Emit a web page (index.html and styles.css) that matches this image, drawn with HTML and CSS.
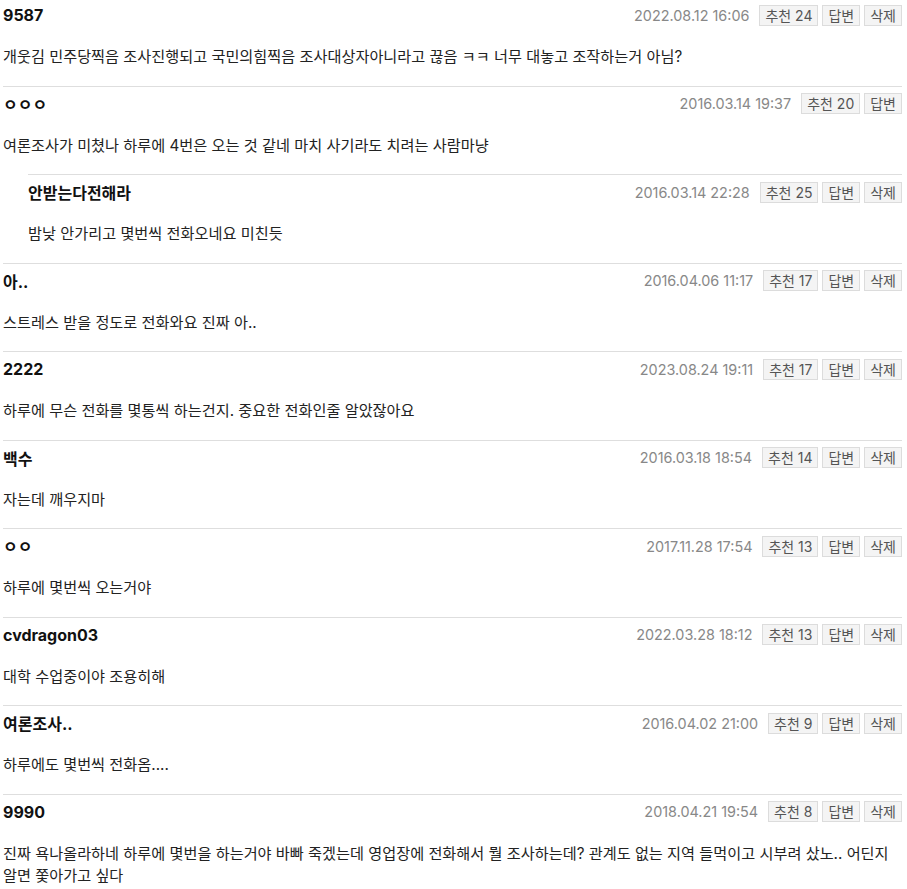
FILE: index.html
```html
<!DOCTYPE html>
<html lang="ko">
<head>
  <meta charset="UTF-8">
  <meta name="viewport" content="width=device-width, initial-scale=1.0">
  <title>댓글</title>
  <link rel="stylesheet" href="styles.css">
</head>
<body>
  <div class="comments">
    <div class="comment">
      <div class="head">
        <span class="name">9587</span>
        <span class="date">2022.08.12 16:06</span>
        <button class="btn">추천 24</button>
        <button class="btn">답변</button>
        <button class="btn">삭제</button>
      </div>
      <p class="text">개웃김 민주당찍음 조사진행되고 국민의힘찍음 조사대상자아니라고 끊음 ㅋㅋ 너무 대놓고 조작하는거 아님?</p>
    </div>

    <div class="comment">
      <div class="head">
        <span class="name">ㅇㅇㅇ</span>
        <span class="date">2016.03.14 19:37</span>
        <button class="btn">추천 20</button>
        <button class="btn">답변</button>
      </div>
      <p class="text">여론조사가 미쳤나 하루에 4번은 오는 것 같네 마치 사기라도 치려는 사람마냥</p>
    </div>

    <div class="comment reply">
      <div class="head">
        <span class="name">안받는다전해라</span>
        <span class="date">2016.03.14 22:28</span>
        <button class="btn">추천 25</button>
        <button class="btn">답변</button>
        <button class="btn">삭제</button>
      </div>
      <p class="text">밤낮 안가리고 몇번씩 전화오네요 미친듯</p>
    </div>

    <div class="comment">
      <div class="head">
        <span class="name">아..</span>
        <span class="date">2016.04.06 11:17</span>
        <button class="btn">추천 17</button>
        <button class="btn">답변</button>
        <button class="btn">삭제</button>
      </div>
      <p class="text">스트레스 받을 정도로 전화와요 진짜 아..</p>
    </div>

    <div class="comment">
      <div class="head">
        <span class="name">2222</span>
        <span class="date">2023.08.24 19:11</span>
        <button class="btn">추천 17</button>
        <button class="btn">답변</button>
        <button class="btn">삭제</button>
      </div>
      <p class="text">하루에 무슨 전화를 몇통씩 하는건지. 중요한 전화인줄 알았잖아요</p>
    </div>

    <div class="comment">
      <div class="head">
        <span class="name">백수</span>
        <span class="date">2016.03.18 18:54</span>
        <button class="btn">추천 14</button>
        <button class="btn">답변</button>
        <button class="btn">삭제</button>
      </div>
      <p class="text">자는데 깨우지마</p>
    </div>

    <div class="comment">
      <div class="head">
        <span class="name">ㅇㅇ</span>
        <span class="date">2017.11.28 17:54</span>
        <button class="btn">추천 13</button>
        <button class="btn">답변</button>
        <button class="btn">삭제</button>
      </div>
      <p class="text">하루에 몇번씩 오는거야</p>
    </div>

    <div class="comment">
      <div class="head">
        <span class="name">cvdragon03</span>
        <span class="date">2022.03.28 18:12</span>
        <button class="btn">추천 13</button>
        <button class="btn">답변</button>
        <button class="btn">삭제</button>
      </div>
      <p class="text">대학 수업중이야 조용히해</p>
    </div>

    <div class="comment">
      <div class="head">
        <span class="name">여론조사..</span>
        <span class="date">2016.04.02 21:00</span>
        <button class="btn">추천 9</button>
        <button class="btn">답변</button>
        <button class="btn">삭제</button>
      </div>
      <p class="text">하루에도 몇번씩 전화옴....</p>
    </div>

    <div class="comment">
      <div class="head">
        <span class="name">9990</span>
        <span class="date">2018.04.21 19:54</span>
        <button class="btn">추천 8</button>
        <button class="btn">답변</button>
        <button class="btn">삭제</button>
      </div>
      <p class="text">진짜 욕나올라하네 하루에 몇번을 하는거야 바빠 죽겠는데 영업장에 전화해서 뭘 조사하는데? 관계도 없는 지역 들먹이고 시부려 샀노.. 어딘지 알면 쫓아가고 싶다</p>
    </div>
  </div>
</body>
</html>
```

FILE: styles.css
```css
body {
  margin: 0;
  padding: 0 5px 0 3px;
  font-family: Inter, "Noto Sans CJK KR", sans-serif;
  color: #222;
  background: #fff;
}
.comment {
  padding: 6px 0 17px;
  border-top: 1px solid #dedede;
}
.comment:first-child {
  border-top: none;
  padding-top: 4px;
}
.reply {
  margin-left: 25px;
}
.head {
  display: flex;
  align-items: center;
  gap: 4px;
  height: 22px;
}
.name {
  flex: 1;
  font-size: 16px;
  font-weight: 700;
  color: #111;
}
.date {
  font-size: 0.9rem;
  color: #888;
  margin-right: 6px;
}
.btn {
  font-family: inherit;
  font-size: 0.875rem;
  color: #555;
  background: #f4f4f4;
  border: 1px solid #dcdcdc;
  height: 21px;
  padding: 0 5px;
  line-height: 19px;
  margin: 0;
  cursor: pointer;
}
.text {
  margin: 20px 0 0;
  font-size: 0.95rem;
  line-height: 22.5px;
  word-break: keep-all;
}
```
